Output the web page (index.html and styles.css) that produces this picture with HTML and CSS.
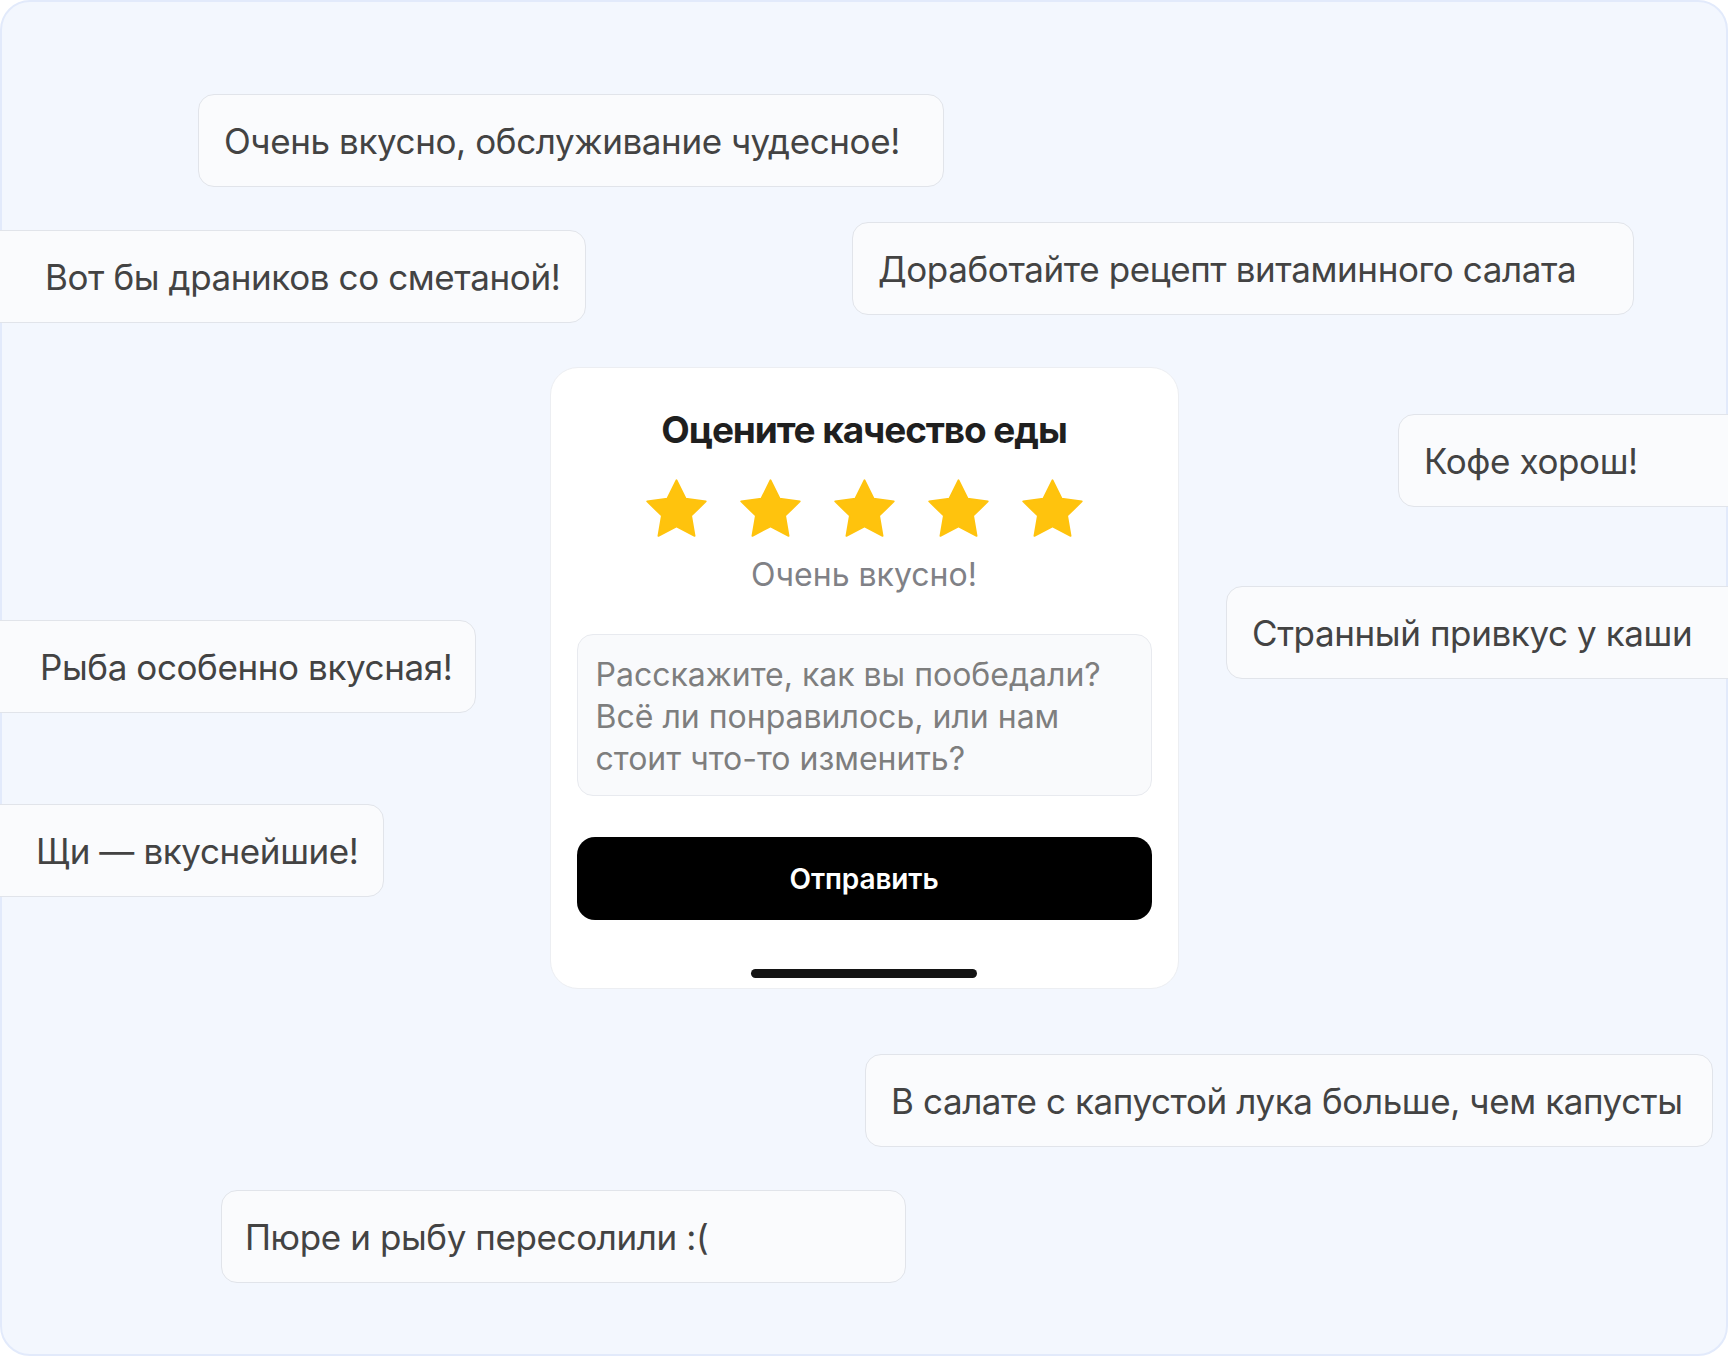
FILE: index.html
```html
<!DOCTYPE html>
<html lang="ru">
<head>
<meta charset="utf-8">
<title>Оценка еды</title>
<link rel="stylesheet" href="styles.css">
</head>
<body>
<div class="canvas">
  <div class="bubble b1">Очень вкусно, обслуживание чудесное!</div>
  <div class="bubble b2">Вот бы драников со сметаной!</div>
  <div class="bubble b3">Доработайте рецепт витаминного салата</div>
  <div class="bubble b4">Кофе хорош!</div>
  <div class="bubble b5">Странный привкус у каши</div>
  <div class="bubble b6">Рыба особенно вкусная!</div>
  <div class="bubble b7">Щи — вкуснейшие!</div>
  <div class="bubble b8">В салате с капустой лука больше, чем капусты</div>
  <div class="bubble b9">Пюре и рыбу пересолили :(</div>

  <div class="card">
    <h1 class="title">Оцените качество еды</h1>
    <div class="stars">
      <svg class="star" viewBox="1.6 1.6 20.8 19.8"><path d="M12 2l3.09 6.26L22 9.27l-5 4.87 1.18 6.88L12 17.77l-6.18 3.25L7 14.14 2 9.27l6.91-1.01L12 2z"/></svg>
      <svg class="star" viewBox="1.6 1.6 20.8 19.8"><path d="M12 2l3.09 6.26L22 9.27l-5 4.87 1.18 6.88L12 17.77l-6.18 3.25L7 14.14 2 9.27l6.91-1.01L12 2z"/></svg>
      <svg class="star" viewBox="1.6 1.6 20.8 19.8"><path d="M12 2l3.09 6.26L22 9.27l-5 4.87 1.18 6.88L12 17.77l-6.18 3.25L7 14.14 2 9.27l6.91-1.01L12 2z"/></svg>
      <svg class="star" viewBox="1.6 1.6 20.8 19.8"><path d="M12 2l3.09 6.26L22 9.27l-5 4.87 1.18 6.88L12 17.77l-6.18 3.25L7 14.14 2 9.27l6.91-1.01L12 2z"/></svg>
      <svg class="star" viewBox="1.6 1.6 20.8 19.8"><path d="M12 2l3.09 6.26L22 9.27l-5 4.87 1.18 6.88L12 17.77l-6.18 3.25L7 14.14 2 9.27l6.91-1.01L12 2z"/></svg>
    </div>
    <div class="verdict">Очень вкусно!</div>
    <div class="field">Расскажите, как вы пообедали? Всё ли понравилось, или нам стоит что-то изменить?</div>
    <button class="send">Отправить</button>
    <div class="home"></div>
  </div>
</div>
</body>
</html>
```

FILE: styles.css
```css
html, body {
  margin: 0;
  padding: 0;
  width: 1728px;
  height: 1356px;
  overflow: hidden;
  background: #ffffff;
  font-family: Inter, "Noto Sans", sans-serif;
}

.canvas {
  position: relative;
  box-sizing: border-box;
  width: 1728px;
  height: 1356px;
  border: 2px solid #e2eafb;
  border-radius: 30px;
  background: #f3f7fe;
  display: flex;
  align-items: center;
  justify-content: center;
}

.bubble {
  position: absolute;
  box-sizing: border-box;
  height: 93px;
  display: flex;
  align-items: center;
  padding: 0 24px 0 25px;
  background: #fafbfd;
  border: 1px solid #e1e4ea;
  border-radius: 16px;
  color: #434343;
  font-size: 35px;
  letter-spacing: -0.4px;
  white-space: nowrap;
}

.b1 { left: 196px; top: 92px; width: 746px; }
.b2 { left: -32px; top: 228px; width: 616px; padding-left: 74px; }
.b3 { left: 850px; top: 220px; width: 782px; }
.b4 { left: 1396px; top: 412px; width: 420px; }
.b5 { left: 1224px; top: 584px; width: 560px; }
.b6 { left: -32px; top: 618px; width: 506px; padding-left: 69px; }
.b7 { left: -32px; top: 802px; width: 414px; padding-left: 65px; }
.b8 { left: 863px; top: 1052px; width: 848px; }
.b9 { left: 219px; top: 1188px; width: 685px; padding-left: 23px; }

.card {
  position: relative;
  z-index: 1;
  box-sizing: border-box;
  width: 629px;
  height: 622px;
  padding: 40px 26px 0;
  background: #ffffff;
  border: 1px solid #eceef2;
  border-radius: 28px;
  display: flex;
  flex-direction: column;
  align-items: center;
}

.title {
  margin: 0;
  font-size: 37px;
  line-height: 44px;
  font-weight: 700;
  letter-spacing: -1.1px;
  color: #1f1f1f;
}

.stars {
  display: flex;
  gap: 33px;
  margin-top: 27px;
}

.star {
  width: 61px;
  height: 58px;
  display: block;
}

.star path {
  fill: #ffc30d;
  stroke: #ffc30d;
  stroke-width: 0.6;
  stroke-linejoin: round;
}

.verdict {
  margin-top: 18px;
  font-size: 32px;
  line-height: 40px;
  color: #808186;
  letter-spacing: 0;
}

.field {
  box-sizing: border-box;
  align-self: stretch;
  margin-top: 39px;
  height: 162px;
  padding: 19px 18px 17px;
  background: #f9fafc;
  border: 1px solid #e8eaef;
  border-radius: 16px;
  font-size: 32px;
  line-height: 42px;
  color: #7e7e7e;
  letter-spacing: 0;
}

.send {
  align-self: stretch;
  margin-top: 41px;
  height: 83px;
  border: 0;
  border-radius: 18px;
  background: #000000;
  color: #ffffff;
  font-family: Inter, "Noto Sans", sans-serif;
  font-size: 28px;
  font-weight: 600;
  letter-spacing: -0.1px;
  padding: 0;
}

.home {
  margin-top: 49px;
  width: 226px;
  height: 9px;
  border-radius: 5px;
  background: #141414;
}
```
